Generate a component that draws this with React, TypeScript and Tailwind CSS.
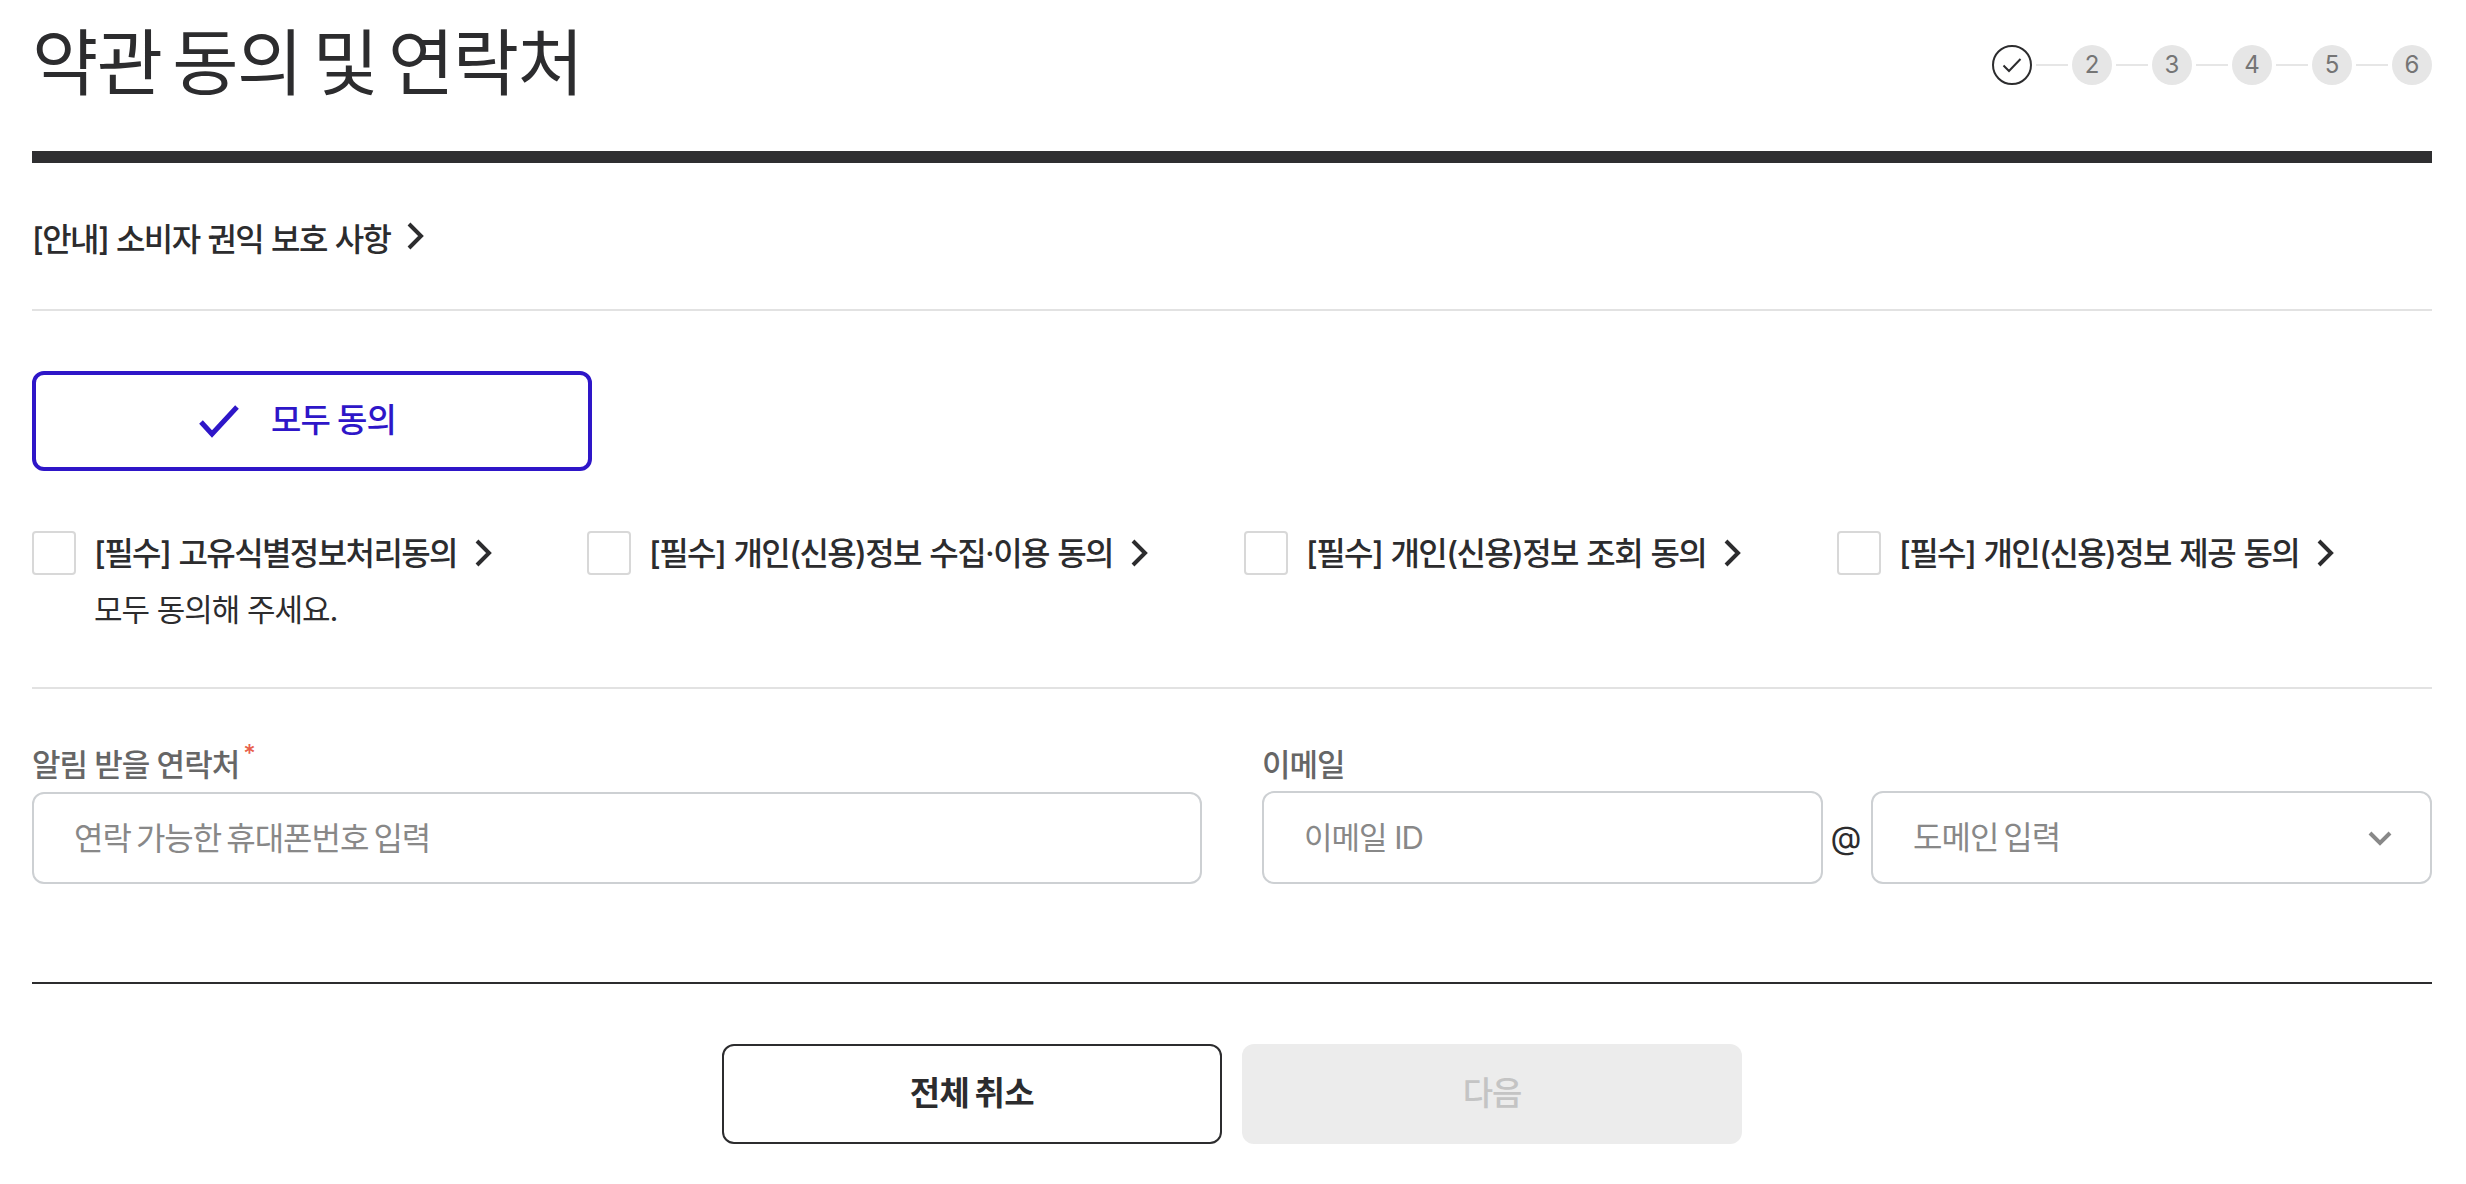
import React from "react";

const FONT = "font-['Inter','Noto_Sans_CJK_KR','Noto_Sans',sans-serif]";

const Chevron: React.FC = () => (
  <svg width="18" height="28" viewBox="0 0 18 28" fill="none" className="shrink-0">
    <path d="M3 2 L15 14 L3 26" stroke="#2c2c2e" strokeWidth="4" />
  </svg>
);

const Stepper: React.FC = () => (
  <div className="flex items-center">
    <div className="w-10 h-10 rounded-full border-2 border-[#2c2c2e] flex items-center justify-center">
      <svg width="22" height="18" viewBox="0 0 22 18" fill="none">
        <path d="M2.5 9.5 L8 15 L19.5 3" stroke="#2c2c2e" strokeWidth="2" />
      </svg>
    </div>
    {[2, 3, 4, 5, 6].map((n) => (
      <React.Fragment key={n}>
        <div className="w-8 h-[2px] bg-[#e6e6e6] mx-1" />
        <div className="w-10 h-10 rounded-full bg-[#e6e6e6] flex items-center justify-center text-[24px] text-[#757575]">
          {n}
        </div>
      </React.Fragment>
    ))}
  </div>
);

const terms = [
  { label: "[필수] 고유식별정보처리동의", width: "w-[555px]", error: true },
  { label: "[필수] 개인(신용)정보 수집·이용 동의", width: "w-[657px]" },
  { label: "[필수] 개인(신용)정보 조회 동의", width: "w-[593px]" },
  { label: "[필수] 개인(신용)정보 제공 동의", width: "" },
];

export default function App() {
  return (
    <div className={`${FONT} bg-white text-[#2c2c2e] w-[2466px] h-[1184px] overflow-hidden pl-8 pr-[34px]`}>
      <header className="flex justify-between items-start h-[151px]">
        <h1 className="text-[72px] leading-[98px] mt-[14px] font-normal tracking-[-1.5px] [word-spacing:-8px]">약관 동의 및 연락처</h1>
        <div className="mt-[45px]">
          <Stepper />
        </div>
      </header>
      <div className="h-3 bg-[#2f2f31]" />

      <div className="h-[148px] flex items-center gap-4 border-b-2 border-[#e2e2e2]">
        <span className="text-[32px] font-medium tracking-[-1.6px] [word-spacing:1px] mt-[8px]">[안내] 소비자 권익 보호 사항</span>
        <Chevron />
      </div>

      <button className="mt-[60px] w-[560px] h-[100px] rounded-xl border-4 border-[#2e16c8] text-[#2e16c8] flex items-center justify-center gap-[31px] pr-[30px]">
        <svg width="42" height="34" viewBox="0 0 42 34" fill="none">
          <path d="M3 18 L14 30 L39 3" stroke="#2e16c8" strokeWidth="5" />
        </svg>
        <span className="text-[33px] font-medium tracking-[-0.8px] [word-spacing:-1px]">모두 동의</span>
      </button>

      <div className="flex mt-[60px] h-[158px] border-b-2 border-[#e2e2e2]">
        {terms.map((t) => (
          <div key={t.label} className={`${t.width} flex items-start gap-[18px]`}>
            <div className="w-11 h-11 rounded border-2 border-[#d8d8d8] shrink-0" />
            <div>
              <div className="flex items-center gap-[17px] h-11">
                <span className="text-[32px] font-medium tracking-[-1.6px] [word-spacing:1.5px] whitespace-nowrap mt-[2px]">{t.label}</span>
                <Chevron />
              </div>
              {t.error && <p className="text-[31px] leading-[44px] mt-[13px] tracking-[-1px]">모두 동의해 주세요.</p>}
            </div>
          </div>
        ))}
      </div>

      <div className="flex gap-[60px] mt-[53px]">
        <div className="w-[1170px]">
          <div className="h-[50px] text-[31px] font-medium tracking-[-1px] text-[#666666] flex items-start">
            <span>알림 받을 연락처</span>
            <span className="text-[#e8604c] text-[24px] leading-[24px] ml-1">*</span>
          </div>
          <input
            placeholder="연락 가능한 휴대폰번호 입력"
            className="w-full h-[92px] rounded-xl border-2 border-[#cdd0d3] px-10 text-[32px] tracking-[-1px] [word-spacing:-3px] placeholder:text-[#888888] outline-none"
          />
        </div>
        <div className="flex-1">
          <div className="h-[49px] text-[31px] font-medium tracking-[-1px] text-[#666666]">이메일</div>
          <div className="flex items-center">
            <input
              placeholder="이메일 ID"
              className="w-[561px] h-[93px] rounded-xl border-2 border-[#cdd0d3] px-10 text-[31px] tracking-[-1px] placeholder:text-[#888888] outline-none"
            />
            <span className="w-[48px] text-center text-[32px] pr-[2px]">@</span>
            <div className="flex-1 h-[93px] rounded-xl border-2 border-[#cdd0d3] pl-10 pr-[38px] flex items-center justify-between text-[32px] tracking-[-1px] [word-spacing:-3px] text-[#888888]">
              <span>도메인 입력</span>
              <svg width="24" height="16" viewBox="0 0 24 16" fill="none">
                <path d="M2 3 L12 13 L22 3" stroke="#888888" strokeWidth="4" />
              </svg>
            </div>
          </div>
        </div>
      </div>

      <div className="h-[2px] bg-[#2c2c2e] mt-[98px]" />

      <div className="flex justify-center gap-5 mt-[60px]">
        <button className="w-[500px] h-[100px] rounded-xl border-2 border-[#2c2c2e] text-[33px] font-bold tracking-[-0.6px] [word-spacing:-2px]">
          전체 취소
        </button>
        <button className="w-[500px] h-[100px] rounded-xl bg-[#ececec] text-[#c4c4c4] text-[33px] font-medium tracking-[-1px]">
          다음
        </button>
      </div>
    </div>
  );
}
